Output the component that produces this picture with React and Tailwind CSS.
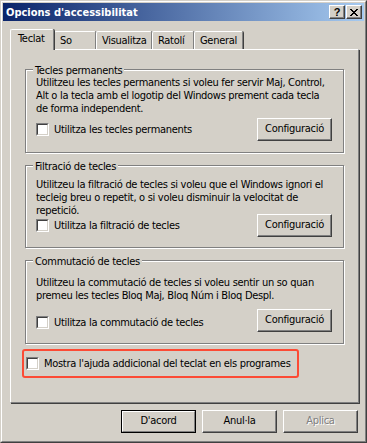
import React from 'react';

const font = { fontFamily: '"DejaVu Sans Condensed", Tahoma, "Liberation Sans", sans-serif' };

function Checkbox() {
  return (
    <div className="w-[13px] h-[13px] shrink-0 border border-t-[#808080] border-l-[#808080] border-r-white border-b-white">
      <div className="w-full h-full bg-white border border-t-[#404040] border-l-[#404040] border-r-[#d4d0c8] border-b-[#d4d0c8]" />
    </div>
  );
}

function Button({ children, disabled, isDefault }) {
  if (isDefault) {
    return (
      <div className="w-[75px] h-[23px] border border-black">
        <div className="w-full h-full flex items-center justify-center border border-t-white border-l-white border-r-[#808080] border-b-[#808080]">
          {children}
        </div>
      </div>
    );
  }
  return (
    <div
      className={
        'w-[75px] h-[23px] shrink-0 flex items-center justify-center border border-t-white border-l-white border-r-[#404040] border-b-[#404040] shadow-[inset_-1px_-1px_0_#808080] ' +
        (disabled ? 'text-[#808080] [text-shadow:1px_1px_0_#fff]' : '')
      }
    >
      {children}
    </div>
  );
}

function Group({ title, lines, label, h, pt, rowMt, boxMt }) {
  return (
    <div
      className={`relative w-[319px] ml-[14px] border border-[#808080] shadow-[inset_1px_1px_0_#fff,1px_1px_0_#fff] pl-[10px] pr-[11px] ${h} ${pt}`}
    >
      <span className="absolute -top-[6px] left-[7px] px-[2px] bg-[#d4d0c8] leading-[13px] whitespace-nowrap">{title}</span>
      <div className="leading-[13px] whitespace-nowrap">
        {lines.map((l, i) => (
          <div key={i}>{l}</div>
        ))}
      </div>
      <div className={`flex items-center justify-between ${rowMt}`}>
        <div className={`flex items-center gap-[5px] ${boxMt}`}>
          <Checkbox />
          <span className="leading-[13px]">{label}</span>
        </div>
        <Button>Configuració</Button>
      </div>
    </div>
  );
}

const tabs = [
  { name: 'So', w: 'w-[42px]' },
  { name: 'Visualitza', w: 'w-[56px]' },
  { name: 'Ratolí', w: 'w-[42px]' },
  { name: 'General', w: 'w-[49px]' },
];

export default function App() {
  return (
    <div className="w-[367px] h-[443px] text-[11px] tracking-[-0.3px] text-black bg-[#d4d0c8] border border-t-[#d4d0c8] border-l-[#d4d0c8] border-r-[#404040] border-b-[#404040]" style={font}>
      <div className="h-full p-px flex flex-col border border-t-white border-l-white border-r-[#808080] border-b-[#808080]">
        {/* Title bar */}
        <div className="h-[18px] shrink-0 flex items-center justify-between pl-[3px] pr-[2px] bg-[linear-gradient(90deg,#0a246a,#a6caf0)]">
          <span className="text-white font-bold text-[11px] tracking-normal leading-[13px] whitespace-nowrap">Opcions d'accessibilitat</span>
          <div className="flex gap-[1px]">
            <div className="w-[16px] h-[14px] flex items-center justify-center bg-[#d4d0c8] border border-t-white border-l-white border-r-[#404040] border-b-[#404040] shadow-[inset_-1px_-1px_0_#808080]">
              <span className="font-bold text-[11px] leading-none" style={{ fontFamily: '"Liberation Sans", sans-serif' }}>?</span>
            </div>
            <div className="w-[16px] h-[14px] flex items-center justify-center bg-[#d4d0c8] border border-t-white border-l-white border-r-[#404040] border-b-[#404040] shadow-[inset_-1px_-1px_0_#808080]">
              <svg width="8" height="7" viewBox="0 0 8 7" shapeRendering="crispEdges">
                <path d="M0 0h2v1H0zM6 0h2v1H6zM1 1h2v1H1zM5 1h2v1H5zM2 2h4v1H2zM3 3h2v1H3zM2 4h4v1H2zM1 5h2v1H1zM5 5h2v1H5zM0 6h2v1H0zM6 6h2v1H6z" fill="#000" />
              </svg>
            </div>
          </div>
        </div>

        {/* Tabs */}
        <div className="h-[28px] shrink-0 flex items-end pl-[7px]">
          <div className="relative z-10 -mb-px w-[44px] h-[21px] pl-[7px] pt-[2px] bg-[#d4d0c8] border-t border-l border-t-white border-l-white border-r border-r-[#808080] shadow-[1px_0_0_#404040] rounded-t-[2px] leading-[13px]">
            Teclat
          </div>
          {tabs.map((t) => (
            <div
              key={t.name}
              className={`${t.w} h-[18px] pl-[5px] pt-[2px] border-t border-l border-t-white border-l-white border-r border-r-[#808080] shadow-[1px_0_0_#404040] rounded-t-[2px] leading-[13px] whitespace-nowrap`}
            >
              {t.name}
            </div>
          ))}
        </div>

        {/* Panel */}
        <div className="ml-[7px] w-[349px] h-[354px] shrink-0 pt-[19px] border border-t-white border-l-white border-r-[#808080] border-b-[#808080] shadow-[1px_1px_0_#404040]">
          <Group
            title="Tecles permanents"
            lines={[
              'Utilitzeu les tecles permanents si voleu fer servir Maj, Control,',
              'Alt o la tecla amb el logotip del Windows prement cada tecla',
              'de forma independent.',
            ]}
            label="Utilitza les tecles permanents"
            h="h-[84px]"
            pt="pt-[6px]"
            rowMt="mt-[3px]"
            boxMt=""
          />
          <div className="h-[12px]" />
          <Group
            title="Filtració de tecles"
            lines={[
              'Utilitzeu la filtració de tecles si voleu que el Windows ignori el',
              'tecleig breu o repetit, o si voleu disminuir la velocitat de',
              'repetició.',
            ]}
            label="Utilitza la filtració de tecles"
            h="h-[83px]"
            pt="pt-[12px]"
            rowMt="-mt-[3px]"
            boxMt=""
          />
          <div className="h-[12px]" />
          <Group
            title="Commutació de tecles"
            lines={[
              'Utilitzeu la commutació de tecles si voleu sentir un so quan',
              'premeu les tecles Bloq Maj, Bloq Núm i Bloq Despl.',
            ]}
            label="Utilitza la commutació de tecles"
            h="h-[84px]"
            pt="pt-[15px]"
            rowMt="mt-[7px]"
            boxMt="mt-[4px]"
          />

          {/* Highlighted option */}
          <div className="mt-[5px] ml-[11px] w-[277px] h-[29px] rounded-[3px] border-2 border-[#fc4b35] flex items-center gap-[5px] pl-[2px]">
            <Checkbox />
            <span className="leading-[13px] whitespace-nowrap">Mostra l'ajuda addicional del teclat en els programes</span>
          </div>
        </div>

        {/* Dialog buttons */}
        <div className="mt-[7px] flex justify-end gap-[6px] pr-[6px]">
          <Button isDefault>D'acord</Button>
          <Button>Anul·la</Button>
          <Button disabled>Aplica</Button>
        </div>
      </div>
    </div>
  );
}
